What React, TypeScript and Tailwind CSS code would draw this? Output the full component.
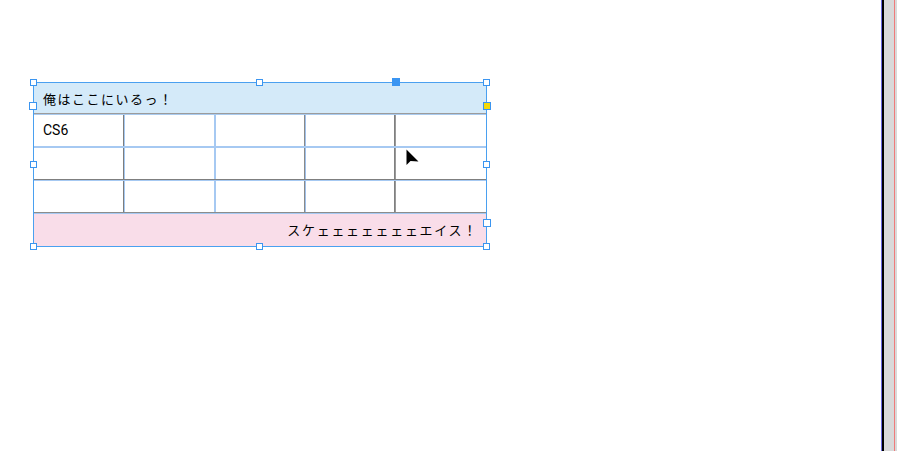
import React from "react";

function HLine({ top, bottom }: { top: string; bottom: string }) {
  return (
    <div className="flex h-[2px] flex-col">
      <div className={`h-px ${top}`} />
      <div className={`h-px ${bottom}`} />
    </div>
  );
}

function VLine({ left, right }: { left: string; right: string }) {
  return (
    <div className="flex w-[2px] flex-row">
      <div className={`w-px ${left}`} />
      <div className={`w-px ${right}`} />
    </div>
  );
}

function BodyRow({ first }: { first?: string }) {
  return (
    <div className="flex h-[31px] flex-row">
      <div
        className="flex w-[89px] items-center pl-[9px] text-[14px] text-black"
        style={{ fontFamily: 'Roboto, "Liberation Sans", sans-serif' }}
      >
        {first}
      </div>
      <VLine left="bg-[#7d7d7d]" right="bg-[#a6c9f2]" />
      <div className="w-[89px]" />
      <VLine left="bg-[#a6c9f2]" right="bg-[#a6c9f2]" />
      <div className="w-[88px]" />
      <VLine left="bg-[#8a8a8a]" right="bg-[#9fc0ea]" />
      <div className="w-[88px]" />
      <VLine left="bg-[#808080]" right="bg-[#9a9a9a]" />
      <div className="w-[90px]" />
    </div>
  );
}

function Handle({ cls }: { cls: string }) {
  return <div className={`absolute ${cls}`} />;
}

export default function App() {
  return (
    <div
      className="relative flex h-[451px] w-[897px] flex-row overflow-hidden bg-white"
      style={{ fontFamily: '"Noto Sans CJK JP", "Noto Sans", sans-serif' }}
    >
      <div className="relative flex-1 pl-[33px] pt-[82px]">
        <div className="relative w-[454px] border border-[#4aa0f0]">
          <div className="flex h-[30px] items-center bg-[#d4eaf9] pl-[9px] pt-[2px] text-[13px] tracking-[1.5px] text-black">
            俺はここにいるっ！
          </div>
          <HLine top="bg-[#9c9c9c]" bottom="bg-[#aacbef]" />
          <BodyRow first="CS6" />
          <HLine top="bg-[#a6c9f2]" bottom="bg-[#a6c9f2]" />
          <BodyRow />
          <HLine top="bg-[#7f7f7f]" bottom="bg-[#a6c9f2]" />
          <BodyRow />
          <HLine top="bg-[#8c8c8c]" bottom="bg-[#a6c9f2]" />
          <div className="flex h-[32px] items-center justify-end bg-[#f9dde9] pr-[8px] text-[13px] tracking-[1.7px] text-black">
            スケェェェェェェェエイス！
          </div>

          {/* selection handles */}
          <Handle cls="left-[-4px] top-[-4px] h-[7px] w-[7px] border border-[#3b95f0] bg-white" />
          <Handle cls="left-[222px] top-[-4px] h-[7px] w-[7px] border border-[#3b95f0] bg-white" />
          <Handle cls="right-[-4px] top-[-4px] h-[7px] w-[7px] border border-[#3b95f0] bg-white" />
          <Handle cls="left-[358px] top-[-5px] h-[8px] w-[8px] bg-[#3a95f2]" />
          <Handle cls="left-[-5px] top-[19px] h-[8px] w-[8px] border border-[#3b95f0] bg-white" />
          <Handle cls="right-[-5px] top-[19px] h-[8px] w-[8px] border border-[#3b95f0] bg-[#f5d90a]" />
          <Handle cls="left-[-4px] top-[78px] h-[7px] w-[7px] border border-[#3b95f0] bg-white" />
          <Handle cls="right-[-4px] top-[78px] h-[7px] w-[7px] border border-[#3b95f0] bg-white" />
          <Handle cls="right-[-5px] top-[136px] h-[8px] w-[8px] border border-[#3b95f0] bg-white" />
          <Handle cls="left-[-4px] bottom-[-4px] h-[7px] w-[7px] border border-[#3b95f0] bg-white" />
          <Handle cls="left-[222px] bottom-[-4px] h-[7px] w-[7px] border border-[#3b95f0] bg-white" />
          <Handle cls="right-[-4px] bottom-[-4px] h-[7px] w-[7px] border border-[#3b95f0] bg-white" />

          {/* mouse cursor */}
          <svg
            className="absolute left-[372px] top-[66px]"
            width="14"
            height="18"
            viewBox="0 0 14 18"
          >
            <path d="M0.5 0.5 L0.5 16 L4.5 12 L12.5 12.5 Z" fill="#000" />
          </svg>
        </div>
      </div>

      {/* right scrollbar edge */}
      <div className="flex h-full flex-row">
        <div className="w-px bg-[#6b6be0]" />
        <div className="w-[2px] bg-black" />
        <div className="w-[10px] bg-[#d9d9d9]" />
        <div className="w-px bg-[#f07a7a]" />
        <div className="w-[2px] bg-[#d9d9d9]" />
      </div>
    </div>
  );
}
